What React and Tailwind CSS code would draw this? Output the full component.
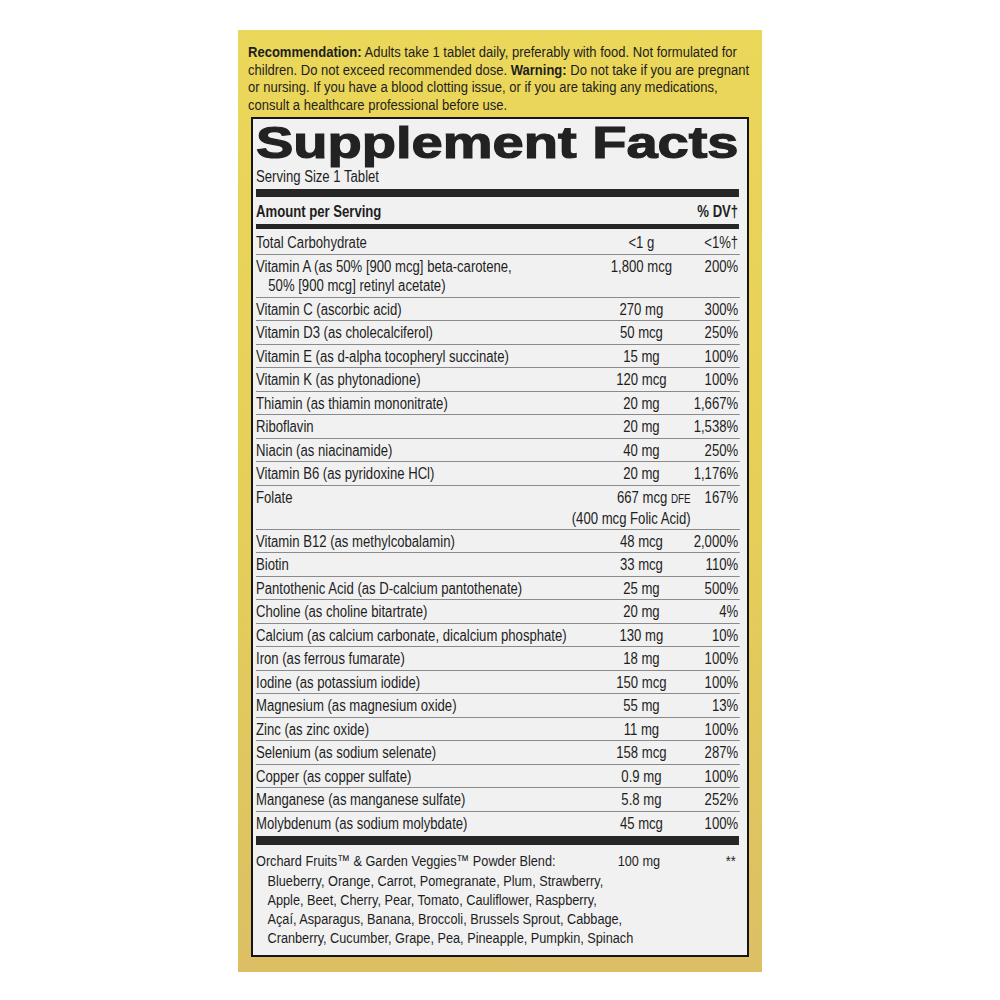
const rows = [
  ['Total Carbohydrate', '<1 g', '<1%†'],
  ['Vitamin A (as 50% [900 mcg] beta-carotene,', '1,800 mcg', '200%', '50% [900 mcg] retinyl acetate)'],
  ['Vitamin C (ascorbic acid)', '270 mg', '300%'],
  ['Vitamin D3 (as cholecalciferol)', '50 mcg', '250%'],
  ['Vitamin E (as d-alpha tocopheryl succinate)', '15 mg', '100%'],
  ['Vitamin K (as phytonadione)', '120 mcg', '100%'],
  ['Thiamin (as thiamin mononitrate)', '20 mg', '1,667%'],
  ['Riboflavin', '20 mg', '1,538%'],
  ['Niacin (as niacinamide)', '40 mg', '250%'],
  ['Vitamin B6 (as pyridoxine HCl)', '20 mg', '1,176%'],
  ['Folate', null, '167%'],
  ['Vitamin B12 (as methylcobalamin)', '48 mcg', '2,000%'],
  ['Biotin', '33 mcg', '110%'],
  ['Pantothenic Acid (as D-calcium pantothenate)', '25 mg', '500%'],
  ['Choline (as choline bitartrate)', '20 mg', '4%'],
  ['Calcium (as calcium carbonate, dicalcium phosphate)', '130 mg', '10%'],
  ['Iron (as ferrous fumarate)', '18 mg', '100%'],
  ['Iodine (as potassium iodide)', '150 mcg', '100%'],
  ['Magnesium (as magnesium oxide)', '55 mg', '13%'],
  ['Zinc (as zinc oxide)', '11 mg', '100%'],
  ['Selenium (as sodium selenate)', '158 mcg', '287%'],
  ['Copper (as copper sulfate)', '0.9 mg', '100%'],
  ['Manganese (as manganese sulfate)', '5.8 mg', '252%'],
  ['Molybdenum (as sodium molybdate)', '45 mcg', '100%'],
];

const blend = [
  'Blueberry, Orange, Carrot, Pomegranate, Plum, Strawberry,',
  'Apple, Beet, Cherry, Pear, Tomato, Cauliflower, Raspberry,',
  'Açaí, Asparagus, Banana, Broccoli, Brussels Sprout, Cabbage,',
  'Cranberry, Cucumber, Grape, Pea, Pineapple, Pumpkin, Spinach',
];

// columns are in unscaled units; the table body is squeezed with scale-x to mimic a condensed face
function Row({ row, last }) {
  const [name, amount, dv, extra] = row;
  let pad = 'pb-[1.5px]';
  if (extra) pad = 'pb-[2px]';
  if (!amount) pad = 'pb-[1px]';
  return (
    <div className={`grid grid-cols-[minmax(0,1fr)_100px_68px] pr-[2px] pt-[2px] leading-[19px] ${pad} ${last ? '' : 'border-b-[1.5px] border-[#8a8a8a]'}`}>
      <div className="whitespace-nowrap">
        {name}
        {extra && <div className="pl-[15px]">{extra}</div>}
      </div>
      {amount ? (
        <div className="text-center whitespace-nowrap">{amount}</div>
      ) : (
        <div className="flex flex-col items-end whitespace-nowrap -mr-[10px]">
          <div>667 mcg <span className="text-[12px]">DFE</span></div>
          <div>(400 mcg Folic Acid)</div>
        </div>
      )}
      <div className="text-right whitespace-nowrap">{dv}</div>
    </div>
  );
}

export default function App() {
  return (
    <div className="w-[1000px] h-[1000px] bg-white relative font-['Liberation_Sans',Arial,sans-serif] text-[#1e1e1e]">
      <div className="absolute left-[238px] top-[30px] w-[524px] h-[942px] bg-gradient-to-b from-[#ebd75a] via-[#e6cf58] to-[#dcbf64] px-[13px] pt-[13px]">
        <p className="w-[590px] origin-left scale-x-[0.84] -ml-[3px] text-[15.5px] leading-[17.5px] whitespace-nowrap">
          <b>Recommendation:</b> Adults take 1 tablet daily, preferably with food. Not formulated for<br />
          children. Do not exceed recommended dose. <b>Warning:</b> Do not take if you are pregnant<br />
          or nursing. If you have a blood clotting issue, or if you are taking any medications,<br />
          consult a healthcare professional before use.
        </p>
        <div className="mt-[4px] border-2 border-[#151515] bg-[#f1f1f1] h-[840px] px-[3px] text-[16px] overflow-hidden">
          <div className="h-[46px] pt-[1px]">
            <div className="origin-left scale-x-[1.245] font-bold text-[45px] leading-[46px] text-[#222] [-webkit-text-stroke:1.2px_#222] whitespace-nowrap">
              Supplement Facts
            </div>
          </div>
          <div className="w-[590px] origin-left scale-x-[0.82]">
            <div className="leading-[19px] pt-[2px]">Serving Size 1 Tablet</div>
            <div className="h-[8px] bg-[#262626] mt-[3px] mr-[1px]" />
            <div className="flex justify-between font-bold leading-[19px] pt-[5px] pr-[2px]">
              <span>Amount per Serving</span>
              <span>% DV†</span>
            </div>
            <div className="h-[5px] bg-[#262626] mt-[3px] mb-[2px] mr-[1px]" />
            {rows.map((r, i) => (
              <Row key={i} row={r} last={i === rows.length - 1} />
            ))}
            <div className="h-[9px] bg-[#262626] mt-[2px] mr-[1px]" />
            <div className="text-[15.5px]">
              <div className="grid grid-cols-[minmax(0,1fr)_100px_68px] pr-[5px] pt-[6px] leading-[19px]">
                <div className="whitespace-nowrap">Orchard Fruits™ &amp; Garden Veggies™ Powder Blend:</div>
                <div className="text-center">100 mg</div>
                <div className="text-right">**</div>
              </div>
              <div className="pl-[14px] leading-[19px] pt-[1px]">
                {blend.map((l) => (
                  <div key={l} className="whitespace-nowrap">{l}</div>
                ))}
              </div>
            </div>
          </div>
        </div>
      </div>
    </div>
  );
}
